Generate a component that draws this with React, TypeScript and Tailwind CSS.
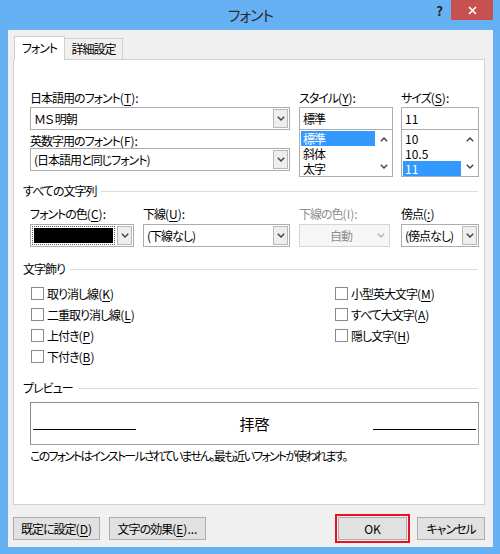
import React from "react";

const font = "font-['Noto_Sans_CJK_JP','Noto_Sans',sans-serif] [font-feature-settings:'palt'] tracking-[-1px]";

function ChevronDown({ color = "#404040" }: { color?: string }) {
  return (
    <svg width="8" height="5" viewBox="0 0 8 5">
      <polyline points="0.8,0.8 4,4 7.2,0.8" fill="none" stroke={color} strokeWidth="1.4" />
    </svg>
  );
}

function ChevronUp() {
  return (
    <svg width="8" height="5" viewBox="0 0 8 5">
      <polyline points="0.8,4.2 4,1 7.2,4.2" fill="none" stroke="#404040" strokeWidth="1.4" />
    </svg>
  );
}

// access key in parentheses, e.g. (T)
function K({ c }: { c: string }) {
  return (
    <span className="tracking-normal">
      (<span className="underline underline-offset-[2px]">{c}</span>)
    </span>
  );
}

function Label({ children, gray }: { children: React.ReactNode; gray?: boolean }) {
  return (
    <div className={`h-[14px] leading-[14px] whitespace-nowrap ${gray ? "text-[#8d8d8d]" : ""}`}>{children}</div>
  );
}

function ArrowBox() {
  return (
    <div className="m-px flex w-[15px] items-center justify-center border border-[#b9b9b9] bg-[#eeeeee]">
      <ChevronDown />
    </div>
  );
}

function Combo({ text, className }: { text: string; className: string }) {
  return (
    <div className={`flex h-[23px] border border-[#acacac] bg-white ${className}`}>
      <div className="flex flex-1 items-center whitespace-nowrap pl-[3px]">{text}</div>
      <ArrowBox />
    </div>
  );
}

function ListBox({ items, selected, className }: { items: string[]; selected: number; className: string }) {
  return (
    <div className={`flex h-[47px] border border-[#acacac] border-t-0 bg-white ${className}`}>
      <div className="flex-1 pl-px pt-px">
        {items.map((it, i) => (
          <div
            key={it}
            className={`flex h-[15px] items-center pl-[2px] leading-[13px] ${i === selected ? "bg-[#3399ff] text-white" : ""}`}
          >
            {it}
          </div>
        ))}
      </div>
      <div className="flex w-[17px] flex-col items-center justify-between py-[7px]">
        <ChevronUp />
        <ChevronDown />
      </div>
    </div>
  );
}

function Section({ title }: { title: string }) {
  return (
    <div className="flex h-[14px] items-center gap-[5px] pl-[9px] pr-[6px] leading-[14px]">
      <span className="whitespace-nowrap">{title}</span>
      <div className="h-px flex-1 bg-[#dcdcdc]" />
    </div>
  );
}

function Check({ children }: { children: React.ReactNode }) {
  return (
    <div className="flex h-[21px] items-center gap-[3px]">
      <div className="h-[13px] w-[13px] border border-[#8a8a8a] bg-white" />
      <span className="whitespace-nowrap leading-[14px]">{children}</span>
    </div>
  );
}

function Button({ children, className }: { children: React.ReactNode; className: string }) {
  return (
    <div
      className={`flex h-[23px] items-center justify-center border border-[#adadad] bg-[#e1e1e1] whitespace-nowrap ${className}`}
    >
      {children}
    </div>
  );
}

export default function App() {
  return (
    <div className={`flex h-[554px] w-[500px] flex-col bg-[#65b1f4] pb-[7px] pl-[8px] pr-[7px] text-[12px] text-black ${font}`}>
      <div className="grid h-[30px] grid-cols-[1fr_auto_1fr]">
        <div />
        <div className="pt-[5px] text-[15px] leading-[20px] text-[#2b2b2b]">フォント</div>
        <div className="flex justify-end">
          <div className="mr-[5px] pt-[2px] text-[13px] font-bold leading-[18px] text-[#222]">?</div>
          <div className="ml-[4px] flex h-[20px] w-[42px] items-center justify-center bg-[#c75050]">
            <svg width="9" height="9" viewBox="0 0 9 9">
              <path d="M1 1L8 8M8 1L1 8" stroke="white" strokeWidth="1.6" />
            </svg>
          </div>
        </div>
      </div>

      <div className="flex flex-1 flex-col bg-[#f0f0f0] pl-[5px] pr-[8px] pt-[6px]">
        <div className="flex items-end pl-px">
          <div className="relative z-10 -mb-px flex h-[24px] w-[51px] items-center justify-center border border-b-0 border-[#d0d0d0] bg-white pb-[2px]">
            フォント
          </div>
          <div className="flex h-[21px] w-[58px] items-center justify-center border border-b-0 border-l-0 border-[#d0d0d0] bg-[#f0f0f0]">
            詳細設定
          </div>
        </div>

        <div className="flex h-[446px] flex-col border border-[#d0d0d0] bg-white">
          <div className="mt-[31px] flex pl-[16px]">
            <div className="flex w-[260px] flex-col">
              <Label>
                日本語用のフォント<K c="T" />:
              </Label>
              <Combo text="ＭＳ 明朝" className="mt-[2px] w-[260px]" />
              <div className="mt-[4px]">
                <Label>
                  英数字用のフォント<K c="F" />:
                </Label>
              </div>
              <Combo text="(日本語用と同じフォント)" className="w-[260px]" />
            </div>
            <div className="ml-[9px] flex w-[94px] flex-col">
              <Label>
                スタイル<K c="Y" />:
              </Label>
              <div className="mt-[2px] flex h-[23px] items-center border border-[#acacac] bg-white pl-[3px]">標準</div>
              <ListBox items={["標準", "斜体", "太字"]} selected={0} className="w-[94px]" />
            </div>
            <div className="ml-[8px] flex w-[78px] flex-col">
              <Label>
                サイズ<K c="S" />:
              </Label>
              <div className="mt-[2px] flex h-[23px] items-center border border-[#acacac] bg-white pl-[3px] tracking-normal">11</div>
              <ListBox items={["10", "10.5", "11"]} selected={2} className="w-[78px] tracking-normal" />
            </div>
          </div>

          <div className="mt-[7px]">
            <Section title="すべての文字列" />
          </div>

          <div className="mt-[9px] flex pl-[16px]">
            <div className="flex w-[104px] flex-col">
              <Label>
                フォントの色<K c="C" />:
              </Label>
              <div className="mt-[3px] flex h-[23px] border border-[#acacac] bg-white">
                <div className="m-px flex flex-1 border border-dotted border-[#555] p-px">
                  <div className="flex-1 bg-black" />
                </div>
                <ArrowBox />
              </div>
            </div>
            <div className="ml-[9px] flex w-[147px] flex-col">
              <Label>
                下線<K c="U" />:
              </Label>
              <Combo text="(下線なし)" className="mt-[3px] w-[147px]" />
            </div>
            <div className="ml-[9px] flex w-[91px] flex-col">
              <Label gray>
                下線の色<span className="tracking-normal">(I)</span>:
              </Label>
              <div className="mt-[3px] flex h-[23px] border border-[#d5d5d5] bg-[#f6f6f6]">
                <div className="flex flex-1 items-center justify-center pl-[10px] text-[#8d8d8d]">自動</div>
                <div className="flex w-[17px] items-center justify-center">
                  <ChevronDown color="#b5b5b5" />
                </div>
              </div>
            </div>
            <div className="ml-[11px] flex w-[78px] flex-col">
              <Label>
                傍点<K c=":" />
              </Label>
              <Combo text="(傍点なし)" className="mt-[3px] w-[78px]" />
            </div>
          </div>

          <div className="mt-[15px]">
            <Section title="文字飾り" />
          </div>

          <div className="mt-[7px] flex pl-[17px]">
            <div className="flex w-[304px] flex-col">
              <Check>
                取り消し線<K c="K" />
              </Check>
              <Check>
                二重取り消し線<K c="L" />
              </Check>
              <Check>
                上付き<K c="P" />
              </Check>
              <Check>
                下付き<K c="B" />
              </Check>
            </div>
            <div className="flex flex-col">
              <Check>
                小型英大文字<K c="M" />
              </Check>
              <Check>
                すべて大文字<K c="A" />
              </Check>
              <Check>
                隠し文字<K c="H" />
              </Check>
            </div>
          </div>

          <div className="mt-[14px]">
            <Section title="プレビュー" />
          </div>

          <div className="ml-[16px] mt-[7px] flex h-[43px] w-[449px] items-end border border-[#a0a0a0] border-l-[#8a8a8a] border-t-[#8a8a8a] bg-white px-[2px] pb-[14px]">
            <div className="h-px w-[103px] bg-black" />
            <div className="-mb-[2px] flex-1 text-center text-[15px] leading-[16px] tracking-normal">拝啓</div>
            <div className="h-px w-[103px] bg-black" />
          </div>

          <div className="ml-[16px] mt-[4px] tracking-[-1.8px]">
            <Label>このフォントはインストールされていません。最も近いフォントが使われます。</Label>
          </div>
        </div>

        <div className="mt-[9px] flex items-center justify-between">
          <div className="flex gap-[9px]">
            <Button className="w-[87px]">
              既定に設定<K c="D" />
            </Button>
            <Button className="w-[97px]">
              文字の効果<K c="E" />
              <span className="tracking-normal">...</span>
            </Button>
          </div>
          <div className="flex items-center">
            <div className="border-2 border-[#e81123] p-px">
              <Button className="w-[69px] tracking-normal">OK</Button>
            </div>
            <Button className="ml-[7px] w-[68px]">キャンセル</Button>
          </div>
        </div>
      </div>
    </div>
  );
}
